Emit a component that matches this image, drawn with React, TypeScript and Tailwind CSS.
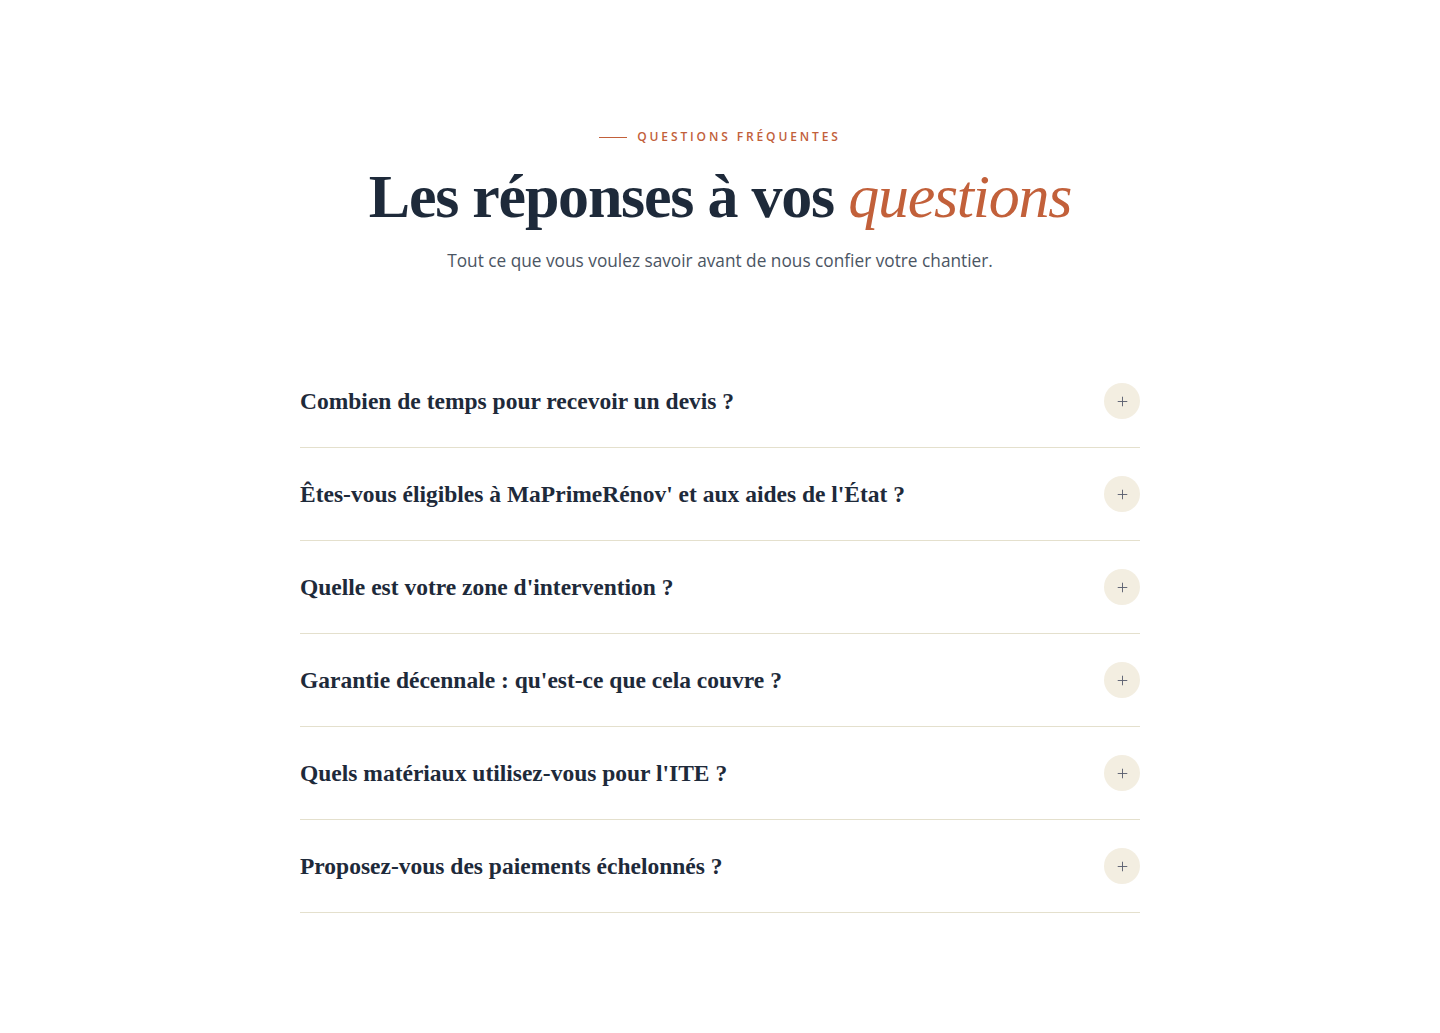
import { Plus } from 'lucide-react';

const FAQS = [
  'Combien de temps pour recevoir un devis ?',
  "Êtes-vous éligibles à MaPrimeRénov' et aux aides de l'État ?",
  "Quelle est votre zone d'intervention ?",
  "Garantie décennale : qu'est-ce que cela couvre ?",
  "Quels matériaux utilisez-vous pour l'ITE ?",
  'Proposez-vous des paiements échelonnés ?',
];

const serif = "font-['Liberation_Serif','DejaVu_Serif',serif]";

export default function App() {
  return (
    <section className="min-h-screen bg-white pt-[128px] pb-[120px]" aria-labelledby="faq-heading">
      <div className="mx-auto max-w-[840px]">
        <div className="text-center">
          <div className="flex items-center justify-center gap-[10px]">
            <span className="h-px w-[28px] bg-[#c2603a]" />
            <span className="font-['Open_Sans',sans-serif] text-[12px] font-semibold tracking-[0.24em] text-[#c2603a]">
              QUESTIONS FRÉQUENTES
            </span>
          </div>
          <h2
            id="faq-heading"
            className={`${serif} mt-[14px] text-[62px] leading-[72px] font-semibold tracking-[-0.02em] text-[#1e2a3a]`}
          >
            Les réponses à vos <em className="font-normal italic text-[#c2603a]">questions</em>
          </h2>
          <p className="mt-[17px] font-['Open_Sans',sans-serif] text-[17.25px] leading-[24px] text-[#4b5563]">
            Tout ce que vous voulez savoir avant de nous confier votre chantier.
          </p>
        </div>

        <div className="mt-[82px]">
          {FAQS.map((q) => (
            <div key={q} className="flex items-center justify-between border-b border-[#e4e0cd] py-[28px]">
              <span className={`${serif} text-[23.5px] leading-[32px] font-semibold text-[#1e2a3a]`}>{q}</span>
              <span className="flex h-[36px] w-[36px] items-center justify-center rounded-full bg-[#f3eee1] text-[#5b6070]">
                <Plus size={15} strokeWidth={1.5} />
              </span>
            </div>
          ))}
        </div>
      </div>
    </section>
  );
}
